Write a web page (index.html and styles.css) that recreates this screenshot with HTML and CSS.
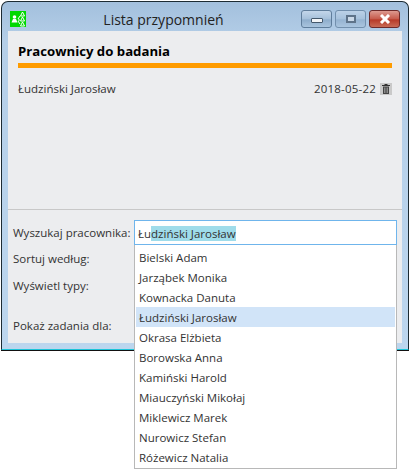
FILE: index.html
```html
<!DOCTYPE html>
<html lang="pl">
<head>
    <meta charset="UTF-8">
    <title>Lista przypomnień</title>
    <link rel="stylesheet" href="styles.css">
</head>
<body>
    <div class="window">
        <div class="titlebar">
            <svg class="app-icon" width="16" height="16" viewBox="0 0 16 16">
                <rect width="16" height="16" fill="#00d800"/>
                <circle cx="4.500" cy="6" r="1.800" fill="#fff"/>
                <path d="M1.500 11.500l1.500-3.500h3l1.500 3.500z" fill="#fff"/>
                <path d="M8 8l2-3M8 9h2M8 10l2 3" fill="none" stroke="#fff"/>
                <path d="M12.500 1l-2 4h4zM12.500 6l-2 4h4zM12.500 11l-2 4h4z" fill="none" stroke="#fff"/>
            </svg>
            <div class="title">Lista przypomnień</div>
            <div class="win-buttons">
                <div class="win-btn"><span class="min-glyph"></span></div>
                <div class="win-btn win-btn-faded"><span class="max-glyph"></span></div>
                <div class="win-btn win-btn-close">
                    <svg width="14" height="10" viewBox="0 0 14 10">
                        <path d="M3 1l8 8M11 1l-8 8" stroke="#fff" stroke-width="3" fill="none"/>
                    </svg>
                </div>
            </div>
        </div>
        <div class="content">
            <div class="list-panel">
                <h2>Pracownicy do badania</h2>
                <div class="orange-line"></div>
                <div class="list-row">
                    <span>Łudziński Jarosław</span>
                    <span class="row-right">
                        <span class="date">2018-05-22</span>
                        <svg class="trash" width="12" height="12" viewBox="0 0 12 12">
                            <rect width="12" height="12" fill="#c9c9c9"/>
                            <path d="M2 2.500h8M4.500 1.500h3" stroke="#333" fill="none"/>
                            <path d="M3 3.500h6V11H3z" fill="#444"/>
                            <path d="M4.500 4.500v5.500M6 4.500v5.500M7.500 4.500v5.500" stroke="#bbb" stroke-width="0.6"/>
                        </svg>
                    </span>
                </div>
            </div>
            <div class="filters">
                <div class="filter-row row-search">
                    <label>Wyszukaj pracownika:</label>
                    <div class="search-box">
                        <div class="search-input">Łu<span class="selected">dziński Jarosław</span></div>
                        <ul class="dropdown">
                            <li>Bielski Adam</li>
                            <li>Jarząbek Monika</li>
                            <li>Kownacka Danuta</li>
                            <li class="active">Łudziński Jarosław</li>
                            <li>Okrasa Elżbieta</li>
                            <li>Borowska Anna</li>
                            <li>Kamiński Harold</li>
                            <li>Miauczyński Mikołaj</li>
                            <li>Miklewicz Marek</li>
                            <li>Nurowicz Stefan</li>
                            <li>Różewicz Natalia</li>
                        </ul>
                    </div>
                </div>
                <div class="filter-row row-sort"><label>Sortuj według:</label></div>
                <div class="filter-row row-types"><label>Wyświetl typy:</label></div>
                <div class="filter-row row-tasks"><label>Pokaż zadania dla:</label></div>
            </div>
        </div>
    </div>
</body>
</html>
```

FILE: styles.css
```css
html, body {
    height: 100%;
}

body {
    font-family: 'Open Sans', sans-serif;
    font-size: 11.5px;
    margin: 0;
    padding: 0;
    background-color: #fff;
    color: #333;
}

.window {
    box-sizing: border-box;
    width: 408px;
    height: 349px;
    margin: 1px 0 0 1px;
    padding: 0 6px 6px;
    background: linear-gradient(#a3c0dd, #b5cfe8 40px, #bcd6ee);
    border: 1px solid #1c2b33;
    border-bottom-color: #1cc4d8;
    box-shadow: 0 1px 0 #111;
    border-radius: 7px 7px 0 0;
    display: flex;
    flex-direction: column;
}

.titlebar {
    display: flex;
    align-items: flex-start;
    height: 29px;
    flex-shrink: 0;
}

.app-icon {
    margin: 9px 0 0 2px;
    flex-shrink: 0;
}

.title {
    flex: 1;
    text-align: center;
    font-size: 14px;
    line-height: 20px;
    margin-top: 8px;
    color: #222;
}

.win-buttons {
    display: flex;
    gap: 3px;
    margin: 8px 2px 0 0;
}

.win-btn {
    box-sizing: border-box;
    width: 31px;
    height: 18px;
    border: 1px solid #5f7d9b;
    border-radius: 3px;
    background: linear-gradient(#c3d6ea, #a5c0da 50%, #8eadcc 55%, #a9c4de);
    display: flex;
    align-items: center;
    justify-content: center;
}

.win-btn-faded {
    opacity: 0.75;
}

.win-btn-close {
    border-color: #6d2a2a;
    background: linear-gradient(#dd9a90, #c65a4b 50%, #b73a28 55%, #c86a55);
}

.min-glyph {
    width: 10px;
    height: 3px;
    margin-top: 3px;
    background: #f2f4f7;
    border: 1px solid #44586c;
    border-radius: 1px;
}

.max-glyph {
    box-sizing: border-box;
    width: 10px;
    height: 8px;
    border: 2px solid #45586c;
    background: #d5dfe9;
}

.content {
    flex: 1;
    background-color: #ecedef;
    display: flex;
    flex-direction: column;
}

.list-panel {
    box-sizing: border-box;
    height: 179px;
    padding: 0 10px;
    border-bottom: 1px solid #c8c8c8;
}

.list-panel h2 {
    margin: 0;
    padding-top: 12px;
    font-size: 13.2px;
    line-height: 16px;
    font-weight: 700;
    color: #000;
}

.orange-line {
    height: 5px;
    margin-top: 4px;
    background-color: #ff9c00;
}

.list-row {
    display: flex;
    justify-content: space-between;
    margin-top: 13px;
    line-height: 16px;
}

.row-right {
    display: flex;
    align-items: center;
    gap: 4px;
}

.date {
    letter-spacing: 0.2px;
}

.filters {
    padding-left: 5px;
}

.filter-row {
    display: flex;
}

.filter-row label {
    width: 121px;
    line-height: 16px;
}

.row-search {
    margin-top: 10px;
    align-items: center;
}

.row-sort {
    margin-top: 6px;
}

.row-types {
    margin-top: 11px;
}

.row-tasks {
    margin-top: 24px;
}

.search-box {
    position: relative;
    flex: 1;
    margin-right: 5px;
}

.search-input {
    box-sizing: border-box;
    height: 25px;
    padding: 4px 3px 2px;
    line-height: 17px;
    background: #fff;
    border: 1px solid #6fb5ec;
}

.selected {
    background-color: #9fdcea;
}

.dropdown {
    position: absolute;
    left: 0;
    right: 0;
    top: 25px;
    margin: 0;
    padding: 2px 1px 1px;
    list-style: none;
    background: #fff;
    border: 1px solid #b8b8b8;
    border-top: 0;
}

.dropdown li {
    height: 20px;
    line-height: 22px;
    padding-left: 3px;
}

.dropdown li.active {
    background-color: #d1e4f8;
}
```
